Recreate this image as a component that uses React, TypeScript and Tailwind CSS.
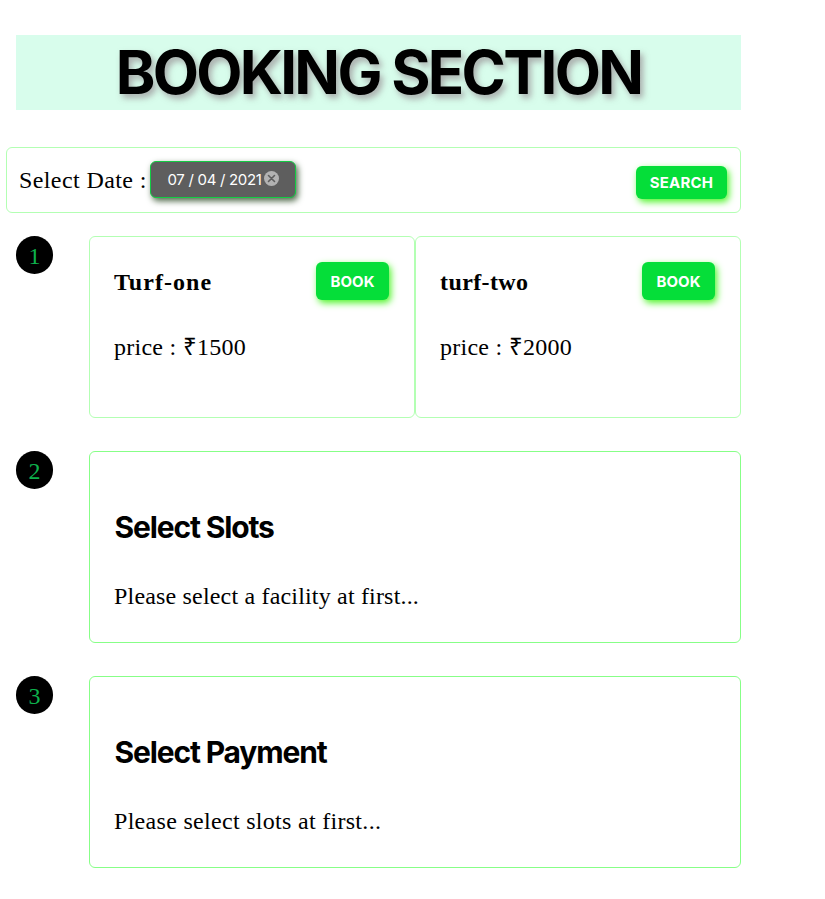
import type { ReactNode } from "react";

const serif = "font-['Liberation_Serif',serif]";

function StepBadge({ n }: { n: number }) {
  return (
    <div className={`${serif} mr-9 flex h-[37.5px] w-[37px] shrink-0 items-center justify-center rounded-full bg-black pt-[2px] text-[24px] leading-none text-[#0eb04c]`}>
      {n}
    </div>
  );
}

function ActionButton({ children, className }: { children: ReactNode; className: string }) {
  return (
    <button
      className={`flex items-center justify-center rounded-[6px] bg-[#05de39] pt-[2px] font-['Inter',sans-serif] text-[15px] font-bold text-white shadow-[2px_3px_7px_#50f52a] ${className}`}
    >
      {children}
    </button>
  );
}

function TurfCard({ name, price, nameSpacing }: { name: string; price: string; nameSpacing: string }) {
  return (
    <div className="h-[182px] w-[326px] rounded-[6px] border border-[#b3ffb3] px-6 pt-[25px]">
      <div className="flex items-start justify-between">
        <h3 className={`pt-[6px] text-[24px] leading-[28px] font-bold ${nameSpacing}`}>{name}</h3>
        <ActionButton className="mr-[1px] h-[38px] w-[73px] tracking-[0.05px]">BOOK</ActionButton>
      </div>
      <p className="mt-[33px] text-[24px] leading-[28px] tracking-[0.25px]">price : ₹{price}</p>
    </div>
  );
}

function StepPanel({ title, text, textSpacing }: { title: string; text: string; textSpacing: string }) {
  return (
    <div className="h-[192px] flex-1 rounded-[6px] border border-[#87ff87] px-6 pt-[57px]">
      <h2 className="pl-[0.5px] font-['Inter',sans-serif] text-[30px] leading-[36px] font-bold tracking-[-1.15px]">{title}</h2>
      <p className={`mt-[37px] text-[24px] leading-[28px] ${textSpacing}`}>{text}</p>
    </div>
  );
}

export default function App() {
  return (
    <main className={`${serif} h-[899px] w-[825px] bg-white pt-[35px] text-black`}>
      <h1 className="ml-4 h-[75px] w-[725px] bg-[#d8fdec] text-center font-['Inter',sans-serif] text-[60px] leading-[75px] font-bold tracking-[-2.7px] whitespace-nowrap [text-shadow:3px_4px_6px_#968c92b8]">
        BOOKING SECTION
      </h1>

      <section className="mt-[37px] ml-[6px] flex h-[66px] w-[735px] rounded-[6px] border border-[#b3ffb3] pt-[13px] pr-[13px] pl-3">
        <label className="w-[131px] pt-[5px] text-[24px] leading-[28px] tracking-[0.4px] whitespace-nowrap">Select Date :</label>
        <div className="flex h-[37px] w-[146px] items-center rounded-[6px] border border-[#12cc43] bg-[#5e5e5e] pl-[16.5px] font-['Inter',sans-serif] text-[15px] text-white shadow-[2px_3px_6px_#4e6848]">
          <span className="pt-[1px] tracking-[-0.3px] whitespace-nowrap">07 / 04 / 2021</span>
          <svg className="mb-[2px] ml-[2px] shrink-0" width="15" height="15" viewBox="0 0 15 15">
            <circle cx="7.5" cy="7.5" r="7.5" fill="#b2b2b2" />
            <path d="M4.5 4.5l6 6M10.5 4.5l-6 6" stroke="#5e5e5e" strokeWidth="1.6" strokeLinecap="round" />
          </svg>
        </div>
        <ActionButton className="mt-[5px] ml-auto h-[33px] w-[91px] tracking-[0.2px]">SEARCH</ActionButton>
      </section>

      <section className="mt-[23px] ml-4 flex w-[725px]">
        <StepBadge n={1} />
        <TurfCard name="Turf-one" price="1500" nameSpacing="tracking-[1.05px]" />
        <TurfCard name="turf-two" price="2000" nameSpacing="tracking-[0.4px]" />
      </section>

      <section className="mt-[33px] ml-4 flex w-[725px]">
        <StepBadge n={2} />
        <StepPanel title="Select Slots" text="Please select a facility at first..." textSpacing="tracking-[0.18px]" />
      </section>

      <section className="mt-[33px] ml-4 flex w-[725px]">
        <StepBadge n={3} />
        <StepPanel title="Select Payment" text="Please select slots at first..." textSpacing="tracking-[0.3px]" />
      </section>
    </main>
  );
}
